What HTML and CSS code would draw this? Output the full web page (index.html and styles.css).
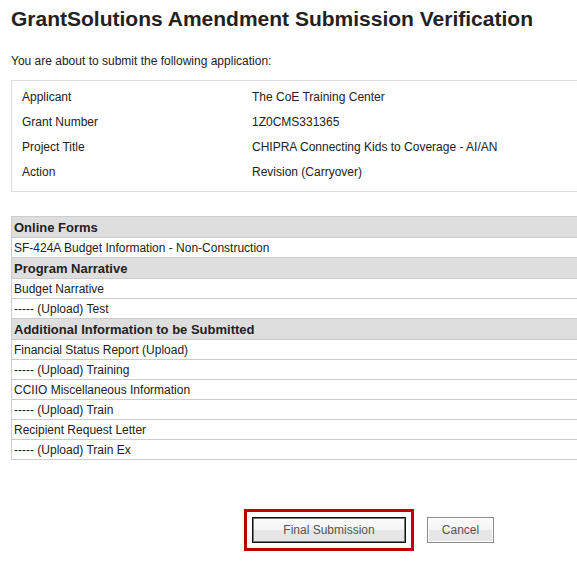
FILE: index.html
```html
<!DOCTYPE html>
<html>
<head>
<meta charset="utf-8">
<link rel="stylesheet" href="styles.css">
</head>
<body>
<h1 class="title">GrantSolutions Amendment Submission Verification</h1>
<p class="intro">You are about to submit the following application:</p>
<div class="info">
  <div class="label">Applicant</div><div class="value">The CoE Training Center</div>
  <div class="label">Grant Number</div><div class="value">1Z0CMS331365</div>
  <div class="label">Project Title</div><div class="value">CHIPRA Connecting Kids to Coverage - AI/AN</div>
  <div class="label">Action</div><div class="value">Revision (Carryover)</div>
</div>
<div class="list">
  <div class="head">Online Forms</div>
  <div class="row">SF-424A Budget Information - Non-Construction</div>
  <div class="head">Program Narrative</div>
  <div class="row">Budget Narrative</div>
  <div class="row">----- (Upload) Test</div>
  <div class="head">Additional Information to be Submitted</div>
  <div class="row">Financial Status Report (Upload)</div>
  <div class="row">----- (Upload) Training</div>
  <div class="row">CCIIO Miscellaneous Information</div>
  <div class="row">----- (Upload) Train</div>
  <div class="row">Recipient Request Letter</div>
  <div class="row">----- (Upload) Train Ex</div>
</div>
<div class="actions">
  <div class="highlight"><button class="btn btn-primary">Final Submission</button></div>
  <button class="btn btn-cancel">Cancel</button>
</div>
</body>
</html>
```
FILE: styles.css
```css
html, body {
  margin: 0;
  padding: 0;
  background: #fff;
}
body {
  padding-left: 11px;
  font-family: "Liberation Sans", Arial, sans-serif;
  color: #222;
  font-size: 12px;
}
.title {
  margin: 6px 0 0 0;
  font-size: 21px;
  line-height: 25px;
  font-weight: bold;
  color: #222;
}
.intro {
  margin: 23px 0 0 0;
  font-size: 12px;
  line-height: 14px;
}
.info {
  margin-top: 12px;
  border: 1px solid #ddd;
  border-right: none;
  padding: 3px 0 7px 10px;
  display: grid;
  grid-template-columns: 230px 1fr;
  grid-auto-rows: 25px;
  align-items: center;
  color: #222;
}
.list {
  margin-top: 24px;
  border-top: 1px solid #ccc;
  border-left: 1px solid #ccc;
}
.head {
  height: 19px;
  line-height: 19px;
  padding-top: 1px;
  background: #dedede;
  border-bottom: 1px solid #ccc;
  font-weight: bold;
  font-size: 13px;
  padding-left: 2px;
}
.row {
  height: 18px;
  line-height: 18px;
  padding-top: 1px;
  border-bottom: 1px solid #ccc;
  padding-left: 2px;
}
.actions {
  margin-top: 49px;
  padding-left: 233px;
  display: flex;
  align-items: center;
  gap: 13px;
}
.highlight {
  border: 3px solid #c00000;
  padding: 5px;
  display: flex;
}
.btn {
  height: 26px;
  font-family: "Liberation Sans", Arial, sans-serif;
  font-size: 12px;
  color: #555;
  background: linear-gradient(#fbfbfb 0, #f4f4f4 50%, #e6e6e6 50%, #e6e6e6 100%);
  margin: 0;
  padding: 0;
}
.btn-primary {
  width: 154px;
  border: 1px solid #111;
  box-shadow: inset 0 0 0 1px #777;
}
.btn-cancel {
  width: 67px;
  border: 1px solid #8a8a8a;
  box-shadow: inset 0 0 0 1px #fff;
}
```
